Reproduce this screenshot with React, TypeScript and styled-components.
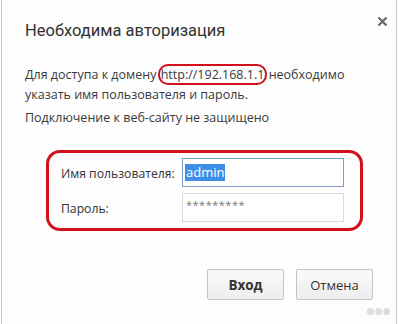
import React from 'react'
import styled, { createGlobalStyle } from 'styled-components'

const GlobalStyle = createGlobalStyle`
  html, body {
    margin: 0;
    padding: 0;
    background: #ffffff;
  }
  body {
    font-family: "Open Sans", "Noto Sans", "Liberation Sans", sans-serif;
    color: #333;
  }
`

const Dialog = styled.div`
  position: relative;
  box-sizing: border-box;
  margin-left: 1px;
  width: 396px;
  height: 324px;
  border-left: 1px solid #c9c9c9;
  border-right: 1px solid #c9c9c9;
  background: #fdfdfd;
  display: flex;
  flex-direction: column;
`

const Header = styled.div`
  display: flex;
  justify-content: space-between;
  align-items: flex-start;
  padding: 20px 6px 0 23px;
`

const Title = styled.h1`
  margin: 0;
  font-family: Roboto, "Open Sans", sans-serif;
  font-size: 16.5px;
  line-height: 22px;
  font-weight: 400;
  color: #333;
`

const Close = styled.button`
  border: none;
  background: none;
  padding: 0;
  margin-top: -7px;
  width: 16px;
  height: 16px;
  display: flex;
  align-items: center;
  justify-content: center;
`

const Body = styled.div`
  padding: 23px 24px 0 23px;
`

const Text = styled.p<{ $gap?: number }>`
  margin: 0 0 ${p => p.$gap ?? 0}px;
  font-size: 12.5px;
  line-height: 20px;
  color: #3a3a3a;
`

const Highlight = styled.span`
  border: 2.5px solid #d2101c;
  border-radius: 10px;
  padding: 0 1px;
  margin: 0 -2px;
`

const Form = styled.div`
  margin: 22px 0 0 21px;
  width: 317px;
  box-sizing: border-box;
  border: 3px solid #d2101c;
  border-radius: 14px;
  padding: 5px 16px 6px 12px;
  display: grid;
  grid-template-columns: 121px 162px;
  row-gap: 6px;
  align-items: center;
`

const Label = styled.label`
  font-size: 12.2px;
  color: #333;
  padding-top: 2px;
`

const Field = styled.div<{ $focused?: boolean }>`
  box-sizing: border-box;
  height: 29px;
  border: 1px solid ${p => (p.$focused ? '#7c9dc8' : '#dadada')};
  background: #fff;
  display: flex;
  align-items: ${p => (p.$focused ? 'center' : 'flex-start')};
  padding: ${p => (p.$focused ? '0 2px' : '5px 3px')};
`

const Selected = styled.span`
  background: #3d8ee6;
  color: #fff;
  font-size: 13px;
  line-height: 17px;
  padding: 0 1px;
`

const Stars = styled.span`
  font-size: 11px;
  line-height: 12px;
  letter-spacing: 0.5px;
  color: #777;
`

const Footer = styled.div`
  margin-top: auto;
  display: flex;
  justify-content: flex-end;
  gap: 12px;
  padding: 0 23px 24px 0;
`

const Button = styled.button<{ $primary?: boolean }>`
  width: 77px;
  height: 31px;
  border: 1px solid #c4c4c4;
  border-radius: 2px;
  background: linear-gradient(#fafafa, #ededed);
  font-family: inherit;
  font-size: ${p => (p.$primary ? 13.5 : 13)}px;
  font-weight: ${p => (p.$primary ? 700 : 400)};
  color: #333;
`

const Dots = styled.div`
  position: absolute;
  right: 6px;
  bottom: 9px;
  display: flex;
  gap: 1px;
`

const Dot = styled.span`
  width: 7px;
  height: 7px;
  border-radius: 50%;
  background: #dcdcdc;
`

export default function App() {
  return (
    <>
      <GlobalStyle />
      <Dialog>
        <Header>
          <Title>Необходима авторизация</Title>
          <Close aria-label="Закрыть">
            <svg width="11" height="11" viewBox="0 0 11 11">
              <path d="M1.5 1.5l8 8M9.5 1.5l-8 8" stroke="#666" strokeWidth="2.2" />
            </svg>
          </Close>
        </Header>
        <Body>
          <Text $gap={3}>
            Для доступа к домену <Highlight>http://192.168.1.1</Highlight> необходимо
            <br />
            указать имя пользователя и пароль.
          </Text>
          <Text>Подключение к веб-сайту не защищено</Text>
          <Form>
            <Label>Имя пользователя:</Label>
            <Field $focused>
              <Selected>admin</Selected>
            </Field>
            <Label>Пароль:</Label>
            <Field>
              <Stars>*********</Stars>
            </Field>
          </Form>
        </Body>
        <Footer>
          <Button $primary>Вход</Button>
          <Button>Отмена</Button>
        </Footer>
        <Dots>
          <Dot />
          <Dot />
          <Dot />
        </Dots>
      </Dialog>
    </>
  )
}
